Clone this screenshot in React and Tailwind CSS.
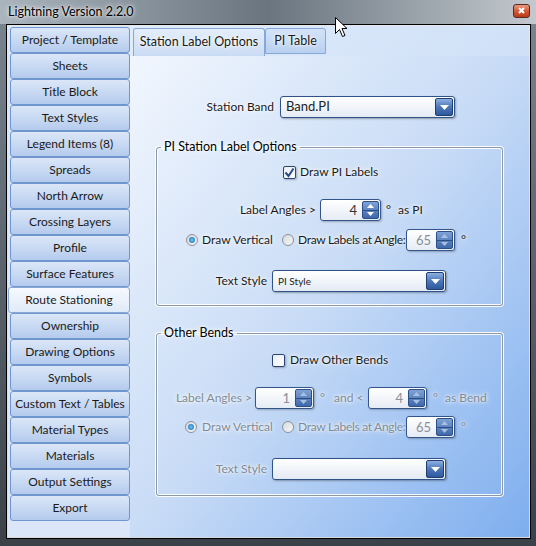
import React from 'react';

const glow = '[text-shadow:0_0_3px_#fff,0_0_6px_#fff]';

const navItems = [
    'Project / Template', 'Sheets', 'Title Block', 'Text Styles', 'Legend Items (8)',
    'Spreads', 'North Arrow', 'Crossing Layers', 'Profile', 'Surface Features',
    'Route Stationing', 'Ownership', 'Drawing Options', 'Symbols', 'Custom Text / Tables',
    'Material Types', 'Materials', 'Output Settings', 'Export',
];

function Tri({ up, dim }) {
    return (
        <svg width="7" height="4" viewBox="0 0 7 4">
            <path d={up ? 'M0 4 L3.5 0 L7 4 Z' : 'M0 0 L7 0 L3.5 4 Z'} fill={dim ? '#a9bfe0' : '#fff'} />
        </svg>
    );
}

function Spin({ value, w, dim }) {
    return (
        <div className={`flex h-[22px] ${w} rounded-[3px] border border-[#34558a] bg-gradient-to-b from-white to-[#e6ecf5] shadow-[1px_1px_2px_rgba(0,0,0,0.25)]`}>
            <div className={`flex-1 text-right pr-[5px] leading-[20px] text-[13px] ${dim ? 'text-[#8a9097]' : 'text-[#333]'}`}>{value}</div>
            <div className="w-[17px] my-[1px] mr-[1px] flex flex-col rounded-[2px] border border-[#2c4f86] bg-gradient-to-b from-[#7fa2d6] to-[#3f68aa]">
                <div className="flex-1 flex items-center justify-center border-b border-[#2c4f86]"><Tri up dim={dim} /></div>
                <div className="flex-1 flex items-center justify-center"><Tri dim={dim} /></div>
            </div>
        </div>
    );
}

function Combo({ w, text, small }) {
    return (
        <div className={`${w} h-[22px] flex items-center rounded-[3px] border border-[#2f5287] bg-gradient-to-b from-white to-[#e4eaf4] shadow-[1px_1px_2px_rgba(0,0,0,0.3)] pl-[5px]`}>
            <span className={`flex-1 ${small ? 'text-[10px]' : 'text-[13px]'} text-[#222]`}>{text}</span>
            <div className="w-[18px] h-[18px] mr-[1px] rounded-[2px] border border-[#1f3f73] bg-gradient-to-b from-[#8cb0e2] via-[#4d76b8] to-[#2d599d] flex items-center justify-center">
                <svg width="9" height="5" viewBox="0 0 9 5"><path d="M0 0 L9 0 L4.5 5 Z" fill="#fff" /></svg>
            </div>
        </div>
    );
}

function Check({ checked }) {
    return (
        <div className="w-[13px] h-[13px] rounded-[2px] border border-[#2a4573] bg-gradient-to-br from-[#e9edf3] to-white shadow-[1px_1px_2px_rgba(0,0,0,0.25)] flex items-center justify-center">
            {checked && (
                <svg width="11" height="11" viewBox="0 0 11 11">
                    <path d="M1.5 5.5 L4.5 9 L9.5 1.5" stroke="#2b4a8c" strokeWidth="2" fill="none" />
                </svg>
            )}
        </div>
    );
}

function Radio({ on }) {
    return (
        <div className="w-[12px] h-[12px] shrink-0 rounded-full border border-[#8a9099] bg-gradient-to-br from-[#d6d9dd] to-[#f7f7f7] flex items-center justify-center">
            {on && <div className="w-[6px] h-[6px] rounded-full bg-radial from-[#6cc6f2] to-[#0f6aaf]" />}
        </div>
    );
}

function Group({ title, className, children }) {
    return (
        <fieldset className={`ml-[26px] w-[347px] border border-[#8c98a4] rounded-[3px] px-0 shadow-[0_0_0_1px_rgba(255,255,255,0.9),inset_0_0_0_1px_rgba(255,255,255,0.9)] ${className}`}>
            <legend className={`ml-[4px] px-[3px] text-[12.5px] leading-[16px] text-black ${glow}`}>{title}</legend>
            {children}
        </fieldset>
    );
}

export default function App() {
    const dis = 'text-[#808b96]';
    return (
        <div className="relative w-[536px] h-[546px] overflow-hidden whitespace-nowrap flex flex-col bg-gradient-to-b from-[#7b8792] via-[#5a636c] to-[#3b4148] font-['Lato','Noto_Sans',sans-serif] text-[12px] text-[#1a1a1a]">
            {/* title bar */}
            <div className="h-[24px] shrink-0 flex items-center pl-[8px] bg-gradient-to-r from-[#aab4bd] via-[#6a757f] to-[#c3c9ce]">
                <span className={`text-[12.5px] text-black ${glow}`}>Lightning Version 2.2.0</span>
                <div className="ml-auto mr-[6px] mb-[3px] w-[17px] h-[14px] rounded-[3px] border border-[#5b2a1e] bg-gradient-to-b from-[#e89a82] via-[#d25a35] to-[#b8391b] flex items-center justify-center">
                    <svg width="7" height="7" viewBox="0 0 7 7"><path d="M1 1 L6 6 M6 1 L1 6" stroke="#fff" strokeWidth="2" /></svg>
                </div>
            </div>

            {/* client area */}
            <div className="ml-[6px] mr-[5px] mb-[7px] flex-1 border border-black">
                <div className="h-full border border-white/80 flex">
                    {/* nav */}
                    <div className="w-[122px] shrink-0 bg-[#dbe7f8] pt-[1px] flex flex-col">
                        {navItems.map((item) => {
                            const sel = item === 'Route Stationing';
                            return (
                                <div
                                    key={item}
                                    className={`h-[26px] flex items-center justify-center rounded-[3px] border ${sel
                                        ? 'ml-0 border-[#8aa7d6] bg-gradient-to-b from-[#f6f9fe] to-[#dfeaf9]'
                                        : 'ml-[2px] border-[#7096cf] bg-gradient-to-b from-[#dbe7f8] to-[#b5cbed]'}`}
                                >
                                    {item}
                                </div>
                            );
                        })}
                    </div>

                    {/* right */}
                    <div className="flex-1 flex flex-col bg-gradient-to-br from-[#f4f8fe] via-[#c9dcf6] to-[#7eaeee]">
                        <div className="h-[30px] shrink-0 flex items-end pl-[3px] bg-[#d6e4f8]/60">
                            <div className={`h-[28px] w-[132px] flex items-center justify-center rounded-t-[3px] border border-b-0 border-[#86a7d8] bg-gradient-to-b from-[#e4eefb] to-[#c9dbf4] text-[12.5px] ${glow}`}>
                                Station Label Options
                            </div>
                            <div className={`h-[26px] mb-[2px] w-[61px] flex items-center justify-center rounded-t-[3px] border border-[#86a7d8] bg-gradient-to-b from-[#d3e2f7] to-[#b9d0f1] text-[12.5px] ${glow}`}>
                                PI Table
                            </div>
                        </div>

                        <div className="flex-1">
                            <div className="mt-[40px] flex items-center">
                                <span className={`w-[144px] text-right ${glow}`}>Station Band</span>
                                <div className="ml-[6px]"><Combo w="w-[175px]" text="Band.PI" /></div>
                            </div>

                            <Group title="PI Station Label Options" className="mt-[21px] pb-[13px]">
                                <div className="mt-[5px] h-[24px] flex items-center pl-[126px]">
                                    <Check checked />
                                    <span className={`ml-[4px] ${glow}`}>Draw PI Labels</span>
                                </div>
                                <div className="mt-[15px] h-[22px] flex items-center">
                                    <span className={`w-[159px] text-right ${glow}`}>Label Angles &gt;</span>
                                    <div className="ml-[4px]"><Spin value="4" w="w-[61px]" /></div>
                                    <span className={`ml-[5px] ${glow}`}>°</span>
                                    <span className={`ml-[7px] ${glow}`}>as PI</span>
                                </div>
                                <div className="mt-[8px] h-[22px] flex items-center pl-[29px]">
                                    <div className="w-[96px] flex items-center">
                                        <Radio on />
                                        <span className={`ml-[4px] ${glow}`}>Draw Vertical</span>
                                    </div>
                                    <div className="w-[124px] flex items-center">
                                        <Radio />
                                        <span className={`ml-[4px] tracking-[-0.3px] ${glow}`}>Draw Labels at Angle:</span>
                                    </div>
                                    <Spin value="65" w="w-[49px]" dim />
                                    <span className={`ml-[6px] ${glow}`}>°</span>
                                </div>
                                <div className="mt-[19px] h-[22px] flex items-center">
                                    <span className={`w-[110px] text-right ${glow}`}>Text Style</span>
                                    <div className="ml-[5px]"><Combo w="w-[174px]" text="PI Style" small /></div>
                                </div>
                            </Group>

                            <Group title="Other Bends" className="mt-[19px] pb-[15px]">
                                <div className="mt-[7px] h-[24px] flex items-center pl-[115px]">
                                    <Check />
                                    <span className={`ml-[5px] ${glow}`}>Draw Other Bends</span>
                                </div>
                                <div className={`mt-[15px] h-[22px] flex items-center ${dis}`}>
                                    <span className={`w-[95px] text-right ${glow}`}>Label Angles &gt;</span>
                                    <div className="ml-[3px]"><Spin value="1" w="w-[59px]" dim /></div>
                                    <span className="w-[54px] flex">
                                        <span className={`ml-[6px] ${glow}`}>°</span>
                                        <span className={`ml-[9px] ${glow}`}>and &lt;</span>
                                    </span>
                                    <Spin value="4" w="w-[59px]" dim />
                                    <span className={`ml-[6px] ${glow}`}>°</span>
                                    <span className={`ml-[7px] ${glow}`}>as Bend</span>
                                </div>
                                <div className={`mt-[7px] h-[22px] flex items-center pl-[28px] ${dis}`}>
                                    <div className="w-[97px] flex items-center">
                                        <Radio on />
                                        <span className={`ml-[5px] ${glow}`}>Draw Vertical</span>
                                    </div>
                                    <div className="w-[124px] flex items-center">
                                        <Radio />
                                        <span className={`ml-[4px] tracking-[-0.3px] ${glow}`}>Draw Labels at Angle:</span>
                                    </div>
                                    <Spin value="65" w="w-[49px]" dim />
                                    <span className={`ml-[6px] ${glow}`}>°</span>
                                </div>
                                <div className={`mt-[20px] h-[22px] flex items-center ${dis}`}>
                                    <span className={`w-[110px] text-right ${glow}`}>Text Style</span>
                                    <div className="ml-[5px]"><Combo w="w-[174px]" text="" /></div>
                                </div>
                            </Group>
                        </div>
                    </div>
                </div>
            </div>

            {/* mouse pointer */}
            <svg className="absolute left-[335px] top-[17px]" width="13" height="21" viewBox="0 0 13 21">
                <path d="M0.5 0.5 L0.5 16.5 L4.5 12.5 L7.5 19.5 L10 18.5 L7 11.5 L12 11.5 Z" fill="#fff" stroke="#000" strokeWidth="1" />
            </svg>
        </div>
    );
}
